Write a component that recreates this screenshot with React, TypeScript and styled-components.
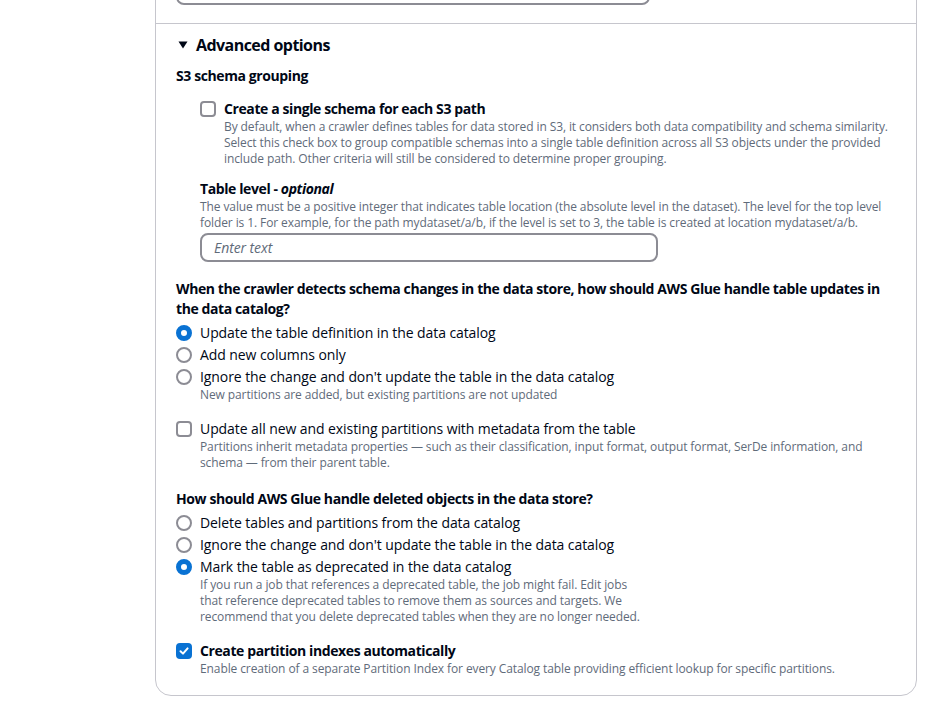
import React from 'react'
import styled, { createGlobalStyle } from 'styled-components'

const GlobalStyle = createGlobalStyle`
  body {
    margin: 0;
    background: #ffffff;
    font-family: 'Open Sans', 'Noto Sans', sans-serif;
    color: #000716;
    -webkit-font-smoothing: antialiased;
  }
`

interface RadioOption {
  label: string
  checked?: boolean
  description?: string
}

const schemaChangeOptions: RadioOption[] = [
  { label: 'Update the table definition in the data catalog', checked: true },
  { label: 'Add new columns only' },
  {
    label: "Ignore the change and don't update the table in the data catalog",
    description: 'New partitions are added, but existing partitions are not updated',
  },
]

const deleteOptions: RadioOption[] = [
  { label: 'Delete tables and partitions from the data catalog' },
  { label: "Ignore the change and don't update the table in the data catalog" },
  {
    label: 'Mark the table as deprecated in the data catalog',
    checked: true,
    description:
      'If you run a job that references a deprecated table, the job might fail. Edit jobs that reference deprecated tables to remove them as sources and targets. We recommend that you delete deprecated tables when they are no longer needed.',
  },
]

const CheckIcon = () => (
  <svg width="12" height="12" viewBox="0 0 12 12" fill="none">
    <path d="M2.5 6.2 L5 8.6 L9.6 3.4" stroke="#ffffff" strokeWidth="2" strokeLinecap="round" strokeLinejoin="round" />
  </svg>
)

const CaretDown = () => (
  <svg width="10" height="8" viewBox="0 0 10 8">
    <path d="M0.5 0.5 H9.5 L5 7.5 Z" fill="#000716" />
  </svg>
)

const Checkbox: React.FC<{ label: string; checked?: boolean; bold?: boolean; description?: string }> = ({
  label,
  checked = false,
  bold = false,
  description,
}) => (
  <ControlRow>
    <ControlSlot>
      <Box $checked={checked}>{checked && <CheckIcon />}</Box>
    </ControlSlot>
    <ControlText>
      <ControlLabel $bold={bold}>{label}</ControlLabel>
      {description && <Description>{description}</Description>}
    </ControlText>
  </ControlRow>
)

const RadioGroup: React.FC<{ options: RadioOption[]; narrow?: boolean }> = ({ options, narrow = false }) => (
  <RadioList>
    {options.map(({ label, checked, description }) => (
      <ControlRow key={label}>
        <ControlSlot>
          <Circle $checked={Boolean(checked)} />
        </ControlSlot>
        <ControlText>
          <ControlLabel>{label}</ControlLabel>
          {description && <Description $narrow={narrow}>{description}</Description>}
        </ControlText>
      </ControlRow>
    ))}
  </RadioList>
)

export default function App() {
  return (
    <>
      <GlobalStyle />
      <Page>
        <Panel>
          <TopSection>
            <TextInput $width={474} />
          </TopSection>
          <Section>
            <SectionHeader>
              <Caret>
                <CaretDown />
              </Caret>
              Advanced options
            </SectionHeader>
            <SectionBody>
              <FieldLabel>S3 schema grouping</FieldLabel>
              <Indented>
                <Checkbox
                  bold
                  label="Create a single schema for each S3 path"
                  description="By default, when a crawler defines tables for data stored in S3, it considers both data compatibility and schema similarity. Select this check box to group compatible schemas into a single table definition across all S3 objects under the provided include path. Other criteria will still be considered to determine proper grouping."
                />
                <FormField>
                  <FieldLabel>
                    Table level - <em>optional</em>
                  </FieldLabel>
                  <Description>
                    The value must be a positive integer that indicates table location (the absolute level in the
                    dataset). The level for the top level folder is 1. For example, for the path mydataset/a/b, if the
                    level is set to 3, the table is created at location mydataset/a/b.
                  </Description>
                  <TextInput $width={458} placeholder="Enter text" />
                </FormField>
              </Indented>

              <Question $gap={17}>
                When the crawler detects schema changes in the data store, how should AWS Glue handle table updates in
                the data catalog?
              </Question>
              <RadioGroup options={schemaChangeOptions} />

              <Spaced>
                <Checkbox
                  label="Update all new and existing partitions with metadata from the table"
                  description="Partitions inherit metadata properties — such as their classification, input format, output format, SerDe information, and schema — from their parent table."
                />
              </Spaced>

              <Question $gap={18}>How should AWS Glue handle deleted objects in the data store?</Question>
              <RadioGroup options={deleteOptions} narrow />

              <Spaced>
                <Checkbox
                  bold
                  checked
                  label="Create partition indexes automatically"
                  description="Enable creation of a separate Partition Index for every Catalog table providing efficient lookup for specific partitions."
                />
              </Spaced>
            </SectionBody>
          </Section>
        </Panel>
      </Page>
    </>
  )
}

const Page = styled.div`
  padding: 0 13px 0 155px;
  height: 708px;
  overflow: hidden;
`

const Panel = styled.div`
  width: 760px;
  margin-top: -27px;
  border: 1px solid #c6c6cd;
  border-radius: 16px;
  background: #ffffff;
`

const TopSection = styled.div`
  padding: 0 20px 18px;
  border-bottom: 1px solid #c6c6cd;
`

const Section = styled.div`
  padding: 10px 20px 18px;
`

const SectionHeader = styled.div`
  display: flex;
  align-items: center;
  font-size: 16px;
  font-weight: 700;
  line-height: 22px;
  letter-spacing: -0.55px;
`

const Caret = styled.span`
  display: flex;
  align-items: center;
  width: 20px;
  padding-left: 2px;
  box-sizing: border-box;
`

const SectionBody = styled.div`
  margin-top: 10px;
`

const FieldLabel = styled.div`
  font-size: 14px;
  font-weight: 700;
  line-height: 20px;
  letter-spacing: -0.4px;

  em {
    font-style: italic;
  }
`

const Indented = styled.div`
  padding-left: 24px;
  margin-top: 13px;
`

const FormField = styled.div`
  margin-top: 12px;
`

const TextInput = styled.input<{ $width: number }>`
  display: block;
  box-sizing: border-box;
  width: ${({ $width }) => $width}px;
  height: 29px;
  margin-top: 2px;
  padding: 0 12px;
  border: 2px solid #8c8c94;
  border-radius: 8px;
  font-family: inherit;
  font-size: 14px;
  letter-spacing: -0.08px;
  color: #000716;
  background: #ffffff;

  &::placeholder {
    color: #5f6b7a;
    font-style: italic;
  }
`

const Question = styled.div<{ $gap?: number }>`
  margin-top: ${({ $gap }) => $gap ?? 16}px;
  font-size: 14px;
  font-weight: 700;
  line-height: 20px;
  letter-spacing: -0.4px;
`

const RadioList = styled.div`
  display: flex;
  flex-direction: column;
  gap: 2px;
  margin-top: 4px;
`

const Spaced = styled.div`
  margin-top: 16px;
`

const ControlRow = styled.div`
  display: flex;
  align-items: flex-start;
  gap: 8px;
`

const ControlSlot = styled.div`
  width: 16px;
  height: 20px;
  display: flex;
  align-items: center;
  flex-shrink: 0;
`

const ControlText = styled.div`
  display: flex;
  flex-direction: column;
`

const ControlLabel = styled.span<{ $bold?: boolean }>`
  font-size: 14px;
  line-height: 20px;
  font-weight: ${({ $bold }) => ($bold ? 700 : 400)};
  letter-spacing: ${({ $bold }) => ($bold ? '-0.4px' : '-0.08px')};
`

const Description = styled.div<{ $narrow?: boolean }>`
  font-size: 12px;
  line-height: 16px;
  color: #5f6b7a;
  letter-spacing: -0.1px;
  width: ${({ $narrow }) => ($narrow ? '448px' : 'auto')};
`

const Box = styled.span<{ $checked: boolean }>`
  box-sizing: border-box;
  width: 16px;
  height: 16px;
  border-radius: 4px;
  border: 2px solid ${({ $checked }) => ($checked ? '#0972d3' : '#8c8c94')};
  background: ${({ $checked }) => ($checked ? '#0972d3' : '#ffffff')};
  display: flex;
  align-items: center;
  justify-content: center;
`

const Circle = styled.span<{ $checked: boolean }>`
  box-sizing: border-box;
  width: 16px;
  height: 16px;
  border-radius: 50%;
  border: ${({ $checked }) => ($checked ? '5px solid #0972d3' : '2px solid #8c8c94')};
  background: #ffffff;
`
